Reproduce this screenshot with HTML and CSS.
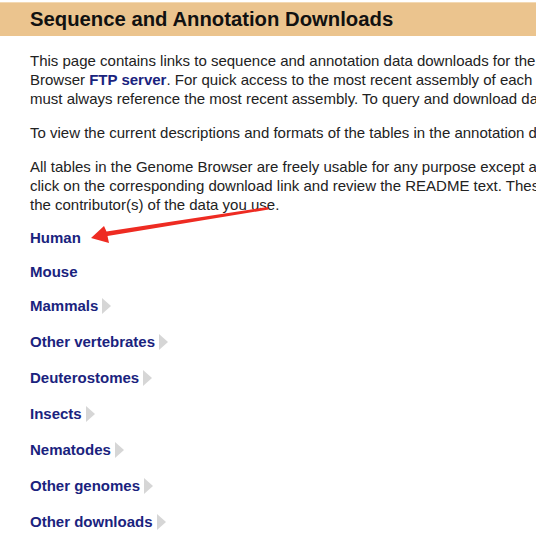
FILE: index.html
```html
<html lang="en">

<head>
    <meta charset="UTF-8">
    <meta name="viewport" content="width=device-width, initial-scale=1.0">
    <title>Sequence and Annotation Downloads</title>
    <link rel="stylesheet" href="styles.css">
</head>

<body>
    <div class="title-bar">
        <h1 class="title">Sequence and Annotation Downloads</h1>
    </div>

    <div class="content">
        <p class="intro">This page contains links to sequence and annotation data downloads for the<br>
            Browser <a class="inline-link" href="#">FTP server</a>. For quick access to the most recent assembly of each<br>
            must always reference the most recent assembly. To query and download data</p>

        <p class="intro">To view the current descriptions and formats of the tables in the annotation database</p>

        <p class="intro">All tables in the Genome Browser are freely usable for any purpose except as<br>
            click on the corresponding download link and review the README text. These<br>
            the contributor(s) of the data you use.</p>

        <div class="org-list">
            <div class="org"><a href="#">Human</a></div>
            <div class="org"><a href="#">Mouse</a></div>
            <div class="org expand"><a href="#">Mammals</a><span class="more"></span></div>
            <div class="org expand"><a href="#">Other vertebrates</a><span class="more"></span></div>
            <div class="org expand"><a href="#">Deuterostomes</a><span class="more"></span></div>
            <div class="org expand"><a href="#">Insects</a><span class="more"></span></div>
            <div class="org expand"><a href="#">Nematodes</a><span class="more"></span></div>
            <div class="org expand"><a href="#">Other genomes</a><span class="more"></span></div>
            <div class="org expand"><a href="#">Other downloads</a><span class="more"></span></div>
        </div>
    </div>

    <!-- red annotation arrow pointing at Human -->
    <svg class="pointer" width="536" height="546" viewBox="0 0 536 546">
        <polygon fill="#ee2b22"
            points="91,238 104,226 106.5,231.5 268,207 268.5,209.5 107.5,236 109,243" />
    </svg>
</body>

</html>
```

FILE: styles.css
```css
body {
    margin: 0;
    font-family: "Liberation Sans", Arial, sans-serif;
    color: #222;
    background: #fff;
    overflow: hidden;
}

.title-bar {
    margin-top: 2px;
    height: 33px;
    background-color: #ebc48e;
    border-top: 1px solid #f3d9b3;
}

.title {
    margin: 0;
    padding-left: 30px;
    font-size: 20.3px;
    line-height: 33px;
    font-weight: bold;
    color: #111;
}

.content {
    padding: 15px 0 0 30px;
    white-space: nowrap;
    overflow: hidden;
}

.intro {
    font-size: 15px;
    line-height: 19px;
    margin: 0 0 15px 0;
    color: #222;
}

.inline-link {
    color: #1a237e;
    font-weight: bold;
    text-decoration: none;
}

.org-list {
    margin-top: 15px;
}

.org {
    font-size: 15px;
    font-weight: bold;
    height: 34px;
    line-height: 18px;
}

.org.expand {
    height: 36px;
}

.org a {
    color: #1a237e;
    text-decoration: none;
}

.more {
    display: inline-block;
    width: 0;
    height: 0;
    margin-left: 4px;
    vertical-align: -3px;
    border-top: 8px solid transparent;
    border-bottom: 8px solid transparent;
    border-left: 9px solid #d6d6d6;
}

.pointer {
    position: absolute;
    left: 0;
    top: 0;
}
```
